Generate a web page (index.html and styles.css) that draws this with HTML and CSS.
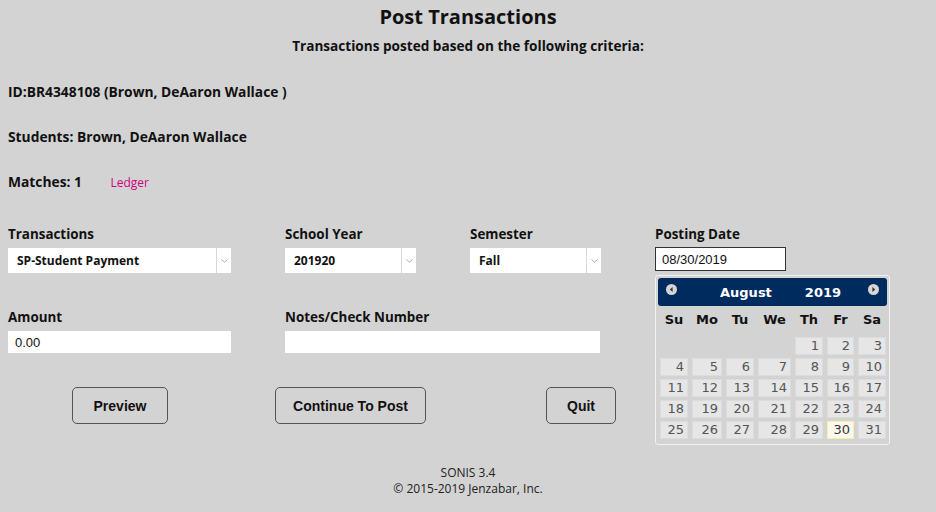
FILE: index.html
```html
<!DOCTYPE html>
<html>
<head>
<meta charset="utf-8">
<link rel="stylesheet" href="styles.css">
</head>
<body>
<div class="page">
  <h1 class="title">Post Transactions</h1>
  <h2 class="subtitle">Transactions posted based on the following criteria:</h2>
  <p class="info info-id">ID:BR4348108 (Brown, DeAaron Wallace )</p>
  <p class="info">Students: Brown, DeAaron Wallace</p>
  <p class="info matches">Matches: 1 <a class="ledger">Ledger</a></p>

  <div class="form-grid">
    <div class="field">
      <label class="label">Transactions</label>
      <div class="select sel-wide"><span class="sel-value">SP-Student Payment</span><span class="sel-arrow"><svg width="7" height="4" viewBox="0 0 7 4"><path d="M0.5 0.5 L3.5 3.2 L6.5 0.5" fill="none" stroke="#aaa" stroke-width="1"/></svg></span></div>
    </div>
    <div class="field">
      <label class="label">School Year</label>
      <div class="select sel-mid"><span class="sel-value">201920</span><span class="sel-arrow"><svg width="7" height="4" viewBox="0 0 7 4"><path d="M0.5 0.5 L3.5 3.2 L6.5 0.5" fill="none" stroke="#aaa" stroke-width="1"/></svg></span></div>
    </div>
    <div class="field">
      <label class="label">Semester</label>
      <div class="select sel-mid"><span class="sel-value">Fall</span><span class="sel-arrow"><svg width="7" height="4" viewBox="0 0 7 4"><path d="M0.5 0.5 L3.5 3.2 L6.5 0.5" fill="none" stroke="#aaa" stroke-width="1"/></svg></span></div>
    </div>
    <div class="field date-field">
      <label class="label">Posting Date</label>
      <input class="date-input" type="text" value="08/30/2019">
      <div class="datepicker">
        <div class="dp-header">
          <span class="dp-nav dp-prev"><svg width="11" height="11" viewBox="0 0 11 11"><circle cx="5.5" cy="5.5" r="5.5" fill="#d6d6d6"/><path d="M6.6 3 L3.8 5.5 L6.6 8 Z" fill="#333"/></svg></span>
          <span class="dp-month">August</span>
          <span class="dp-year">2019</span>
          <span class="dp-nav dp-next"><svg width="11" height="11" viewBox="0 0 11 11"><circle cx="5.5" cy="5.5" r="5.5" fill="#d6d6d6"/><path d="M4.4 3 L7.2 5.5 L4.4 8 Z" fill="#333"/></svg></span>
        </div>
        <div class="dp-grid">
          <span class="dp-dow">Su</span><span class="dp-dow">Mo</span><span class="dp-dow">Tu</span><span class="dp-dow">We</span><span class="dp-dow">Th</span><span class="dp-dow">Fr</span><span class="dp-dow">Sa</span>
          <span class="dp-empty"></span><span class="dp-empty"></span><span class="dp-empty"></span><span class="dp-empty"></span><span class="dp-day">1</span><span class="dp-day">2</span><span class="dp-day">3</span>
          <span class="dp-day">4</span><span class="dp-day">5</span><span class="dp-day">6</span><span class="dp-day">7</span><span class="dp-day">8</span><span class="dp-day">9</span><span class="dp-day">10</span>
          <span class="dp-day">11</span><span class="dp-day">12</span><span class="dp-day">13</span><span class="dp-day">14</span><span class="dp-day">15</span><span class="dp-day">16</span><span class="dp-day">17</span>
          <span class="dp-day">18</span><span class="dp-day">19</span><span class="dp-day">20</span><span class="dp-day">21</span><span class="dp-day">22</span><span class="dp-day">23</span><span class="dp-day">24</span>
          <span class="dp-day">25</span><span class="dp-day">26</span><span class="dp-day">27</span><span class="dp-day">28</span><span class="dp-day">29</span><span class="dp-day dp-today">30</span><span class="dp-day">31</span>
        </div>
      </div>
    </div>

    <div class="field row2">
      <label class="label">Amount</label>
      <input class="text-input amount" type="text" value="0.00">
    </div>
    <div class="field row2 notes-field">
      <label class="label">Notes/Check Number</label>
      <input class="text-input notes" type="text" value="">
    </div>
  </div>

  <div class="buttons">
    <button class="btn btn-preview">Preview</button>
    <button class="btn btn-continue">Continue To Post</button>
    <button class="btn btn-quit">Quit</button>
  </div>

  <footer class="footer">
    <div>SONIS 3.4</div>
    <div>© 2015-2019 Jenzabar, Inc.</div>
  </footer>
</div>
</body>
</html>
```

FILE: styles.css
```css
html, body {
  margin: 0;
  padding: 0;
  background: #d3d3d3;
}

body {
  font-family: "Open Sans", "DejaVu Sans", sans-serif;
  color: #111;
}

.page {
  position: relative;
  padding: 0 8px;
  width: 920px;
}

.title {
  margin: 5px 0 0;
  font-size: 20px;
  line-height: 24px;
  font-weight: 700;
  text-align: center;
}

.subtitle {
  margin: 9px 0 0;
  font-size: 13.6px;
  line-height: 16px;
  font-weight: 700;
  text-align: center;
}

.info {
  margin: 30px 0 0;
  font-size: 13.8px;
  line-height: 16px;
  font-weight: 700;
}

.info + .info {
  margin-top: 29px;
}

.ledger {
  margin-left: 25px;
  font-size: 12px;
  font-weight: 400;
  color: #d1007f;
}

.form-grid {
  display: grid;
  grid-template-columns: 277px 185px 185px 1fr;
  row-gap: 36px;
  margin-top: 35px;
}

.field {
  display: flex;
  flex-direction: column;
  align-items: flex-start;
}

.label {
  font-size: 13.4px;
  line-height: 16px;
  font-weight: 700;
  margin-bottom: 6px;
}

.select {
  display: flex;
  height: 25px;
  background: #fff;
  box-sizing: border-box;
}

.sel-wide { width: 223px; }
.sel-mid { width: 131px; }

.sel-value {
  flex: 1;
  padding-left: 9px;
  font-size: 12px;
  font-weight: 700;
  line-height: 25px;
}

.sel-arrow {
  width: 14px;
  border-left: 1px solid #d9d9d9;
  display: flex;
  align-items: center;
  justify-content: center;
}

.date-field {
  position: relative;
}

.date-input {
  margin: -1px 0 0;
  width: 131px;
  height: 24px;
  box-sizing: border-box;
  border: 1px solid #333;
  background: #fff;
  padding: 0 6px;
  font-family: "Liberation Sans", Arial, sans-serif;
  font-size: 13px;
  color: #111;
  outline: none;
}

.datepicker {
  position: absolute;
  left: 0;
  top: 49px;
  width: 235px;
  height: 170px;
  box-sizing: border-box;
  border: 1px solid #f2f2f2;
  border-radius: 3px;
  background: #d3d3d3;
  padding: 2px;
  z-index: 5;
  font-family: "DejaVu Sans", Verdana, sans-serif;
}

.dp-header {
  display: flex;
  align-items: center;
  height: 28px;
  background: #002b5f;
  border-radius: 3px;
  color: #fff;
  font-weight: 700;
  font-size: 13px;
}

.dp-nav {
  display: flex;
  width: 11px;
  height: 11px;
}

.dp-prev { margin-left: 8px; margin-top: -5px; }
.dp-next { margin-left: auto; margin-right: 8px; margin-top: -5px; }

.dp-month { margin-left: 43px; }
.dp-year { margin-left: 33px; }

.dp-grid {
  display: grid;
  grid-template-columns: 28px 30px 28px 33px 28px 27px 28px;
  grid-template-rows: 28px;
  grid-auto-rows: 18px;
  column-gap: 4px;
  row-gap: 3px;
  margin: 0 0 0 2px;
}

.dp-dow {
  line-height: 28px;
  text-align: center;
  font-weight: 700;
  font-size: 13px;
  color: #111;
}

.dp-day {
  box-sizing: border-box;
  background: #e6e6e6;
  border: 1px solid #dcdcdc;
  color: #555;
  font-size: 13px;
  line-height: 16px;
  text-align: right;
  padding-right: 3px;
}

.dp-today {
  background: #fbf9ee;
  border-color: #fcefa1;
  color: #363636;
}

.text-input {
  margin: 0;
  height: 22px;
  box-sizing: border-box;
  border: 0;
  background: #fff;
  outline: none;
}

.amount {
  width: 223px;
  padding: 0 7px;
  font-family: "Liberation Sans", Arial, sans-serif;
  font-weight: 400;
  font-size: 13px;
  color: #111;
}

.notes-field { grid-column: 2 / span 2; }

.notes {
  width: 315px;
}

.buttons {
  display: flex;
  margin-top: 34px;
}

.btn {
  height: 37px;
  box-sizing: border-box;
  border: 1px solid #555;
  border-radius: 5px;
  background: #d3d3d3;
  font-family: "Liberation Sans", Arial, sans-serif;
  font-weight: 700;
  font-size: 14px;
  color: #111;
  padding: 0;
}

.btn-preview { width: 96px; margin-left: 64px; }
.btn-continue { width: 151px; margin-left: 107px; }
.btn-quit { width: 70px; margin-left: 120px; }

.footer {
  margin-top: 41px;
  text-align: center;
  font-size: 12px;
  line-height: 16px;
  color: #222;
}
```
